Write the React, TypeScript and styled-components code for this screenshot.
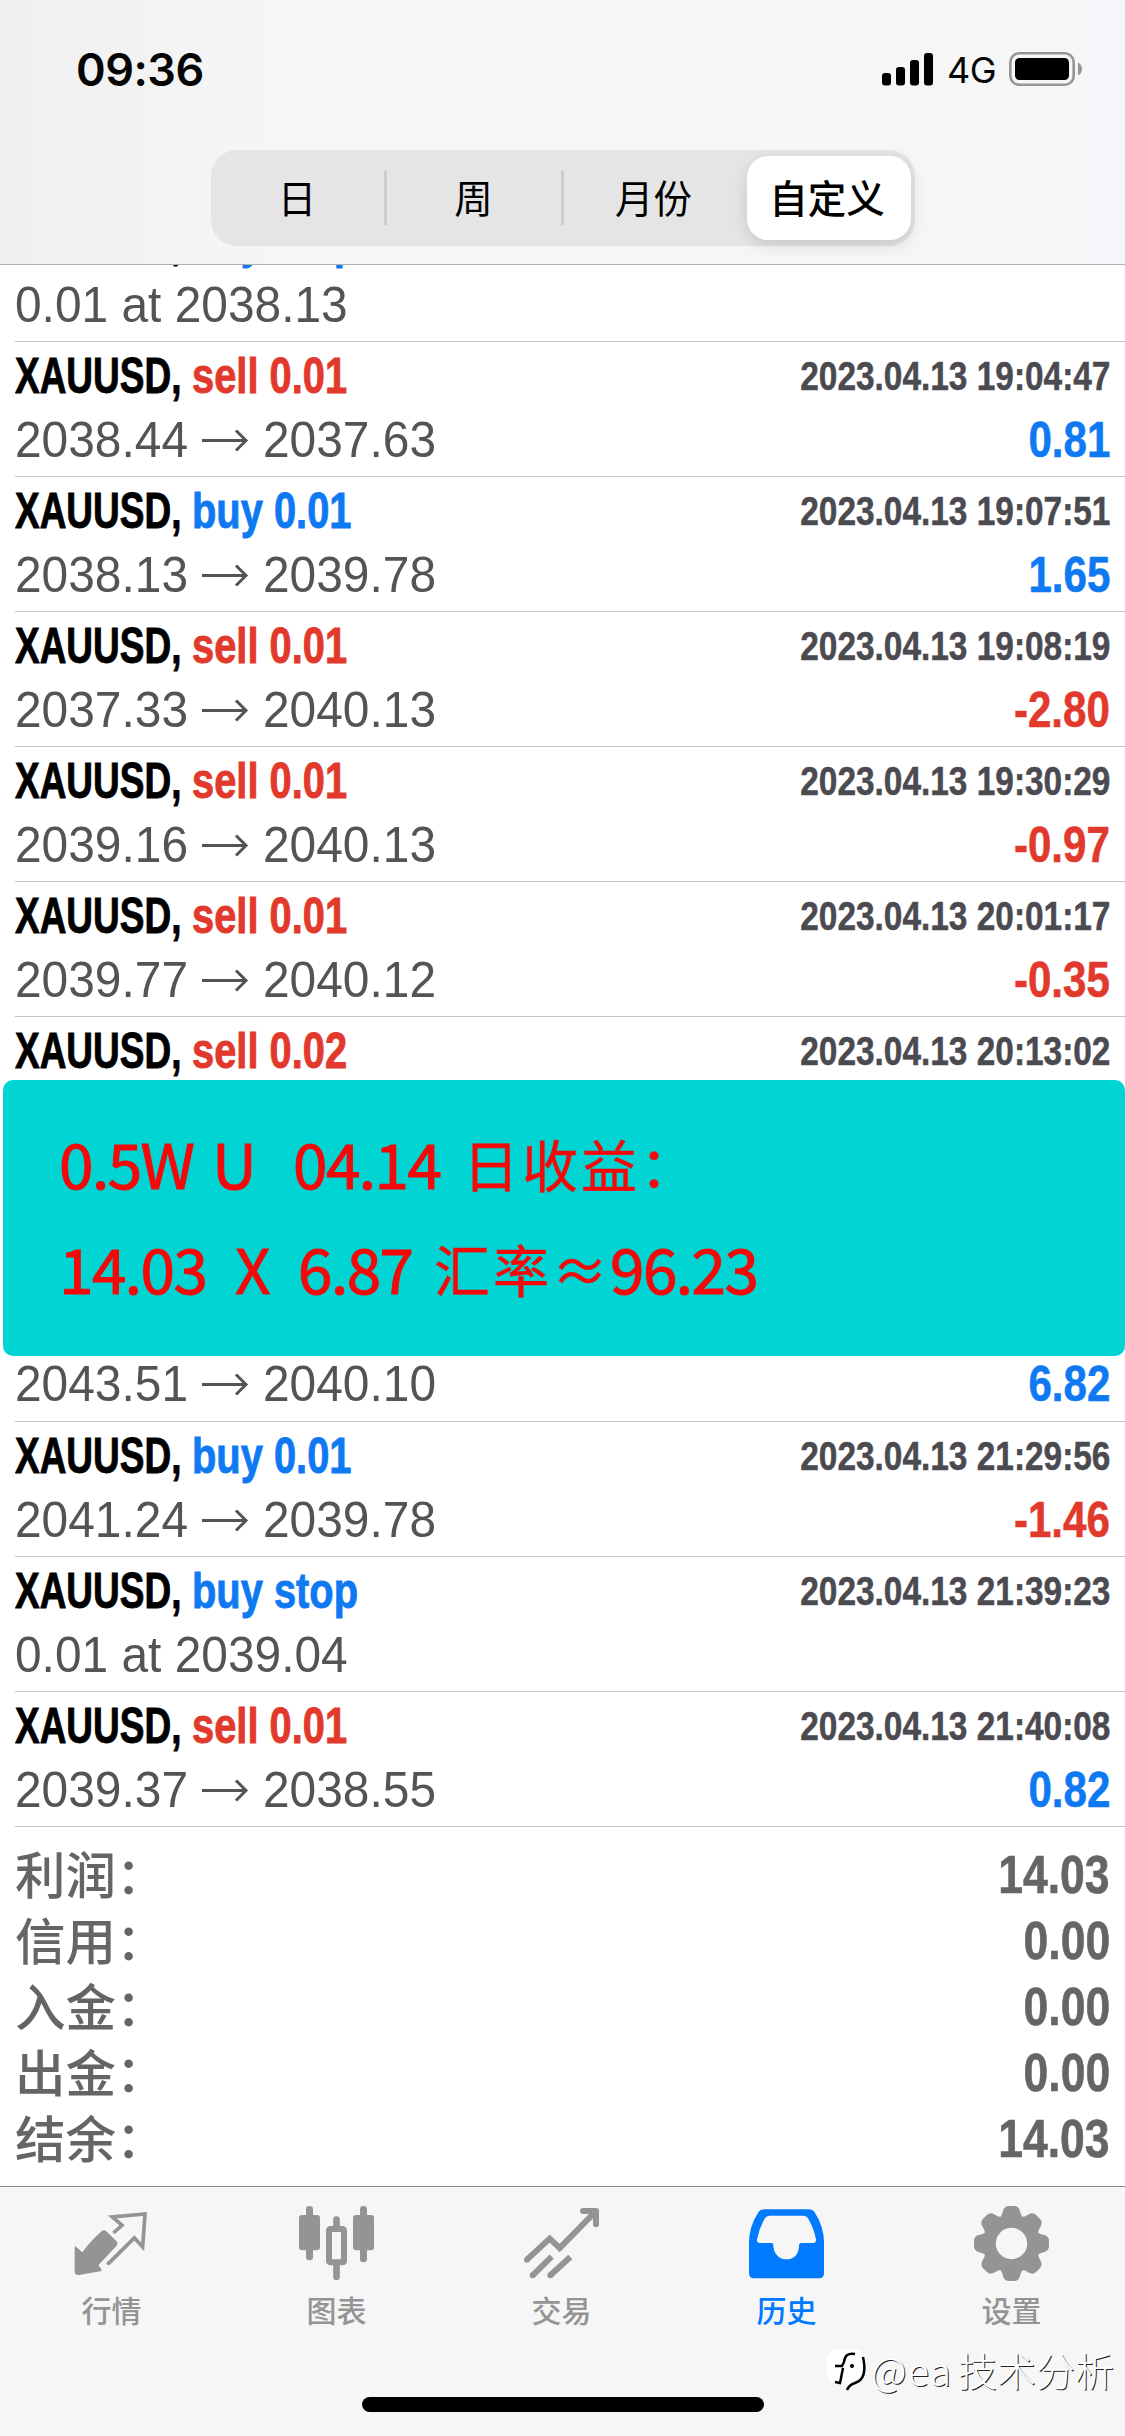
import React from "react";
import styled, { createGlobalStyle } from "styled-components";

const RED = "#e2392d";
const BLUE = "#0f79f2";
const CJK = `"Noto Sans CJK SC", sans-serif`;
const LATIN = `"Liberation Sans", "Noto Sans CJK SC", sans-serif`;

const GlobalStyle = createGlobalStyle`
  * { box-sizing: border-box; }
  body { margin: 0; background: #fff; }
`;

const Screen = styled.div`
  position: relative;
  width: 1125px;
  height: 2436px;
  overflow: hidden;
  display: flex;
  flex-direction: column;
  background: #fff;
  font-family: ${LATIN};
`;

const Header = styled.header`
  position: relative;
  z-index: 1;
  flex: none;
  height: 265px;
  display: flex;
  flex-direction: column;
  align-items: center;
  border-bottom: 1px solid #b0b0b3;
  background: linear-gradient(90deg, #f0f0f1 0, #f3f3f4 150px, #f6f6f6 300px, #f6f6f6 960px, #f5f6f9 1125px);
`;

const StatusBar = styled.div`
  width: 100%;
  height: 150px;
  padding: 41px 42px 0 76px;
  display: flex;
  justify-content: space-between;
  align-items: flex-start;
  font-family: Inter, sans-serif;
  color: #050505;
`;

const Clock = styled.span`
  font-size: 45px;
  font-weight: 600;
  line-height: 57px;
  letter-spacing: -0.5px;
`;

const StatusIcons = styled.div`
  display: flex;
  align-items: center;
  height: 56px;
`;

const Network = styled.span`
  width: 75px;
  padding: 2px 0 0 13px;
  font-size: 36px;
  line-height: 54px;
  letter-spacing: -0.6px;
  white-space: nowrap;
`;

const Segments = styled.nav`
  width: 704px;
  height: 96px;
  padding: 6px 4px 6px 0;
  display: grid;
  grid-template-columns: 176px 177px 183px 164px;
  align-items: center;
  border-radius: 26px;
  background: #e5e5e6;
`;

const Segment = styled.button<{ $active?: boolean; $divider?: boolean }>`
  height: ${(p) => (p.$active ? 84 : 54)}px;
  padding: 0 ${(p) => (p.$divider ? 0 : 3)}px 3px 0;
  border: 0;
  border-right: ${(p) => (p.$divider ? "3px solid #cdcdd0" : "0")};
  border-radius: ${(p) => (p.$active ? 21 : 0)}px;
  background: ${(p) => (p.$active ? "#fff" : "transparent")};
  box-shadow: ${(p) => (p.$active ? "0 5px 16px rgba(0,0,0,.13)" : "none")};
  font: ${(p) => (p.$active ? 500 : 400)} 38.5px/51px ${CJK};
  color: #000;
`;

const History = styled.main`
  flex: none;
  margin-top: -58px;
  height: 1979px;
`;

const Deal = styled.article<{ $height?: number; $open?: boolean }>`
  height: ${(p) => p.$height ?? 135}px;
  margin-left: 15px;
  padding: ${(p) => (p.$height === 66 ? 1 : 7)}px 15px 0 0;
  border-bottom: ${(p) => (p.$open ? "0" : "1px solid #c5c5c7")};
  overflow: hidden;
`;

const Line = styled.div`
  display: flex;
  align-items: center;
  height: 54px;
  line-height: 54px;
  white-space: nowrap;

  & + & { margin-top: 10px; }
`;

const SymbolName = styled.span`
  flex: none;
  width: 177px;
  transform: scaleX(0.747);
  transform-origin: left;
  font-size: 49.5px;
  font-weight: 700;
  -webkit-text-stroke: 0.9px currentColor;
  color: #000;
`;

const Side = styled.span<{ $color: string }>`
  transform: scaleX(0.805);
  transform-origin: left;
  font-size: 49.5px;
  font-weight: 700;
  -webkit-text-stroke: 0.9px currentColor;
  color: ${(p) => p.$color};
`;

const Time = styled.time`
  margin-left: auto;
  transform: scaleX(0.835);
  transform-origin: right;
  font-size: 40px;
  font-weight: 700;
  -webkit-text-stroke: 0.5px currentColor;
  color: #4b4a50;
`;

const Price = styled.span<{ $first?: boolean }>`
  ${(p) => (p.$first ? "width: 186px; flex: none;" : "")}
  transform: scaleX(0.967);
  transform-origin: left;
  font-size: 49.5px;
  color: #535358;
`;

const Target = styled(Price)`
  margin-left: 14px;
`;

const Profit = styled.span<{ $color: string }>`
  margin-left: auto;
  transform: scaleX(0.85);
  transform-origin: right;
  font-size: 49.5px;
  font-weight: 700;
  -webkit-text-stroke: 0.6px currentColor;
  color: ${(p) => p.$color};
`;

const Banner = styled.section`
  height: 276px;
  margin-left: 3px;
  padding: 30px 0 0 56px;
  border-radius: 10px;
  background: #00d5d4;
  color: #f40808;
  font-family: ${CJK};
`;

const BannerLine = styled.div`
  display: flex;
  height: 105px;
  line-height: 105px;
`;

const Word = styled.span<{ $w: number; $cjk?: boolean }>`
  flex: none;
  width: ${(p) => p.$w}px;
  font-size: ${(p) => (p.$cjk ? 56 : 62)}px;
  -webkit-text-stroke: ${(p) => (p.$cjk ? 0.4 : 1)}px currentColor;
  letter-spacing: ${(p) => (p.$cjk ? 3 : -1.5)}px;
  white-space: nowrap;
`;

const Totals = styled.dl`
  margin: 0;
  padding: 15px 15px 0;
`;

const TotalRow = styled.div`
  display: flex;
  justify-content: space-between;
  height: 66px;
  line-height: 66px;
  color: #656565;
`;

const TotalLabel = styled.dt`
  margin-top: -3px;
  font: 500 50.5px/66px ${CJK};
`;

const TotalValue = styled.dd`
  margin: 0;
  transform: scaleX(0.84);
  transform-origin: right;
  font-size: 53px;
  font-weight: 700;
  -webkit-text-stroke: 0.6px currentColor;
`;

const TabBar = styled.footer`
  flex: none;
  display: flex;
  flex-direction: column;
  align-items: center;
  height: 250px;
  border-top: 1px solid #8d8d8f;
  background: #f6f6f6;
`;

const Tabs = styled.nav`
  width: 1125px;
  height: 210px;
  padding-top: 19px;
  margin-left: -2px;
  display: grid;
  grid-template-columns: repeat(5, 225px);
`;

const Tab = styled.a<{ $active?: boolean }>`
  display: flex;
  flex-direction: column;
  align-items: center;
  gap: 8px;
  color: ${(p) => (p.$active ? "#007aff" : "#949494")};
  font: 500 30px/40px ${CJK};
`;

const HomeIndicator = styled.div`
  width: 402px;
  height: 15px;
  border-radius: 8px;
  background: #000;
`;

const Watermark = styled.div`
  position: absolute;
  left: 825px;
  top: 2342px;
  display: flex;
  align-items: center;
  height: 54px;
  color: #fff;
  font: 300 39px/54px ${CJK};
  text-shadow: 1px 1px 0 #222;
  white-space: nowrap;
`;

const Handle = styled.span`
  width: 87px;
  letter-spacing: 1.5px;
`;

interface DealData {
  side?: string;
  color?: string;
  time?: string;
  from?: string;
  to?: string;
  note?: string;
  profit?: string;
}

const earlier: DealData[] = [
  { side: "buy stop", color: BLUE, note: "0.01 at 2038.13" },
  { side: "sell 0.01", color: RED, time: "2023.04.13 19:04:47", from: "2038.44", to: "2037.63", profit: "0.81" },
  { side: "buy 0.01", color: BLUE, time: "2023.04.13 19:07:51", from: "2038.13", to: "2039.78", profit: "1.65" },
  { side: "sell 0.01", color: RED, time: "2023.04.13 19:08:19", from: "2037.33", to: "2040.13", profit: "-2.80" },
  { side: "sell 0.01", color: RED, time: "2023.04.13 19:30:29", from: "2039.16", to: "2040.13", profit: "-0.97" },
  { side: "sell 0.01", color: RED, time: "2023.04.13 20:01:17", from: "2039.77", to: "2040.12", profit: "-0.35" },
];

const later: DealData[] = [
  { side: "buy 0.01", color: BLUE, time: "2023.04.13 21:29:56", from: "2041.24", to: "2039.78", profit: "-1.46" },
  { side: "buy stop", color: BLUE, time: "2023.04.13 21:39:23", note: "0.01 at 2039.04" },
  { side: "sell 0.01", color: RED, time: "2023.04.13 21:40:08", from: "2039.37", to: "2038.55", profit: "0.82" },
];

const totals = [
  ["利润：", "14.03"],
  ["信用：", "0.00"],
  ["入金：", "0.00"],
  ["出金：", "0.00"],
  ["结余：", "14.03"],
];

const ArrowShape = styled.svg`
  flex: none;
  fill: none;
  stroke: #535358;
  stroke-width: 3;
`;

const Arrow = () => (
  <ArrowShape width="48" height="24" viewBox="0 0 48 24">
    <path d="M1 12.500H44M35 2.500L45 12.500L35 22.500" />
  </ArrowShape>
);

function DealTitle({ side, color = RED, time }: DealData) {
  return (
    <Line>
      <SymbolName>XAUUSD,</SymbolName>
      <Side $color={color}>{side}</Side>
      {time && <Time>{time}</Time>}
    </Line>
  );
}

function DealDetail({ from, to, note, profit }: DealData) {
  return (
    <Line>
      {note ? (
        <Price>{note}</Price>
      ) : (
        <>
          <Price $first>{from}</Price>
          <Arrow />
          <Target>{to}</Target>
        </>
      )}
      {profit && <Profit $color={profit.startsWith("-") ? RED : BLUE}>{profit}</Profit>}
    </Line>
  );
}

const DealRow = (deal: DealData) => (
  <Deal>
    <DealTitle {...deal} />
    <DealDetail {...deal} />
  </Deal>
);

const Signal = () => (
  <svg width="52" height="34" viewBox="0 0 52 34" fill="#000">
    <rect x="0" y="21" width="9" height="12.5" rx="3" />
    <rect x="14" y="15" width="9" height="18.5" rx="3" />
    <rect x="28" y="8" width="9" height="25.5" rx="3" />
    <rect x="42" y="1" width="9" height="32.5" rx="3" />
  </svg>
);

const Battery = () => (
  <svg width="74" height="34" viewBox="0 0 74 34">
    <rect x="1.3" y="1.3" width="63.4" height="31.4" rx="9" fill="none" stroke="#969696" strokeWidth="2.6" />
    <rect x="6" y="6" width="54" height="22" rx="4.5" fill="#000" />
    <path d="M69 10.5Q73 12.500 73 17Q73 21.500 69 23.500Z" fill="#969696" />
  </svg>
);

const QuotesIcon = () => (
  <svg width="75" height="75" viewBox="223 107 225 225" fill="currentColor">
    <path d="M225 229Q226 226 230 230L248 246Q274 210 306 183Q313 177 320 183L350 212Q357 219 350 227L296 285L305 296Q308 301 302 303L238 314Q225 316 225 303Z" />
    <path d="M341 188L367 165L338 140L436 131L429 230L404 203L327 279" fill="none" stroke="currentColor" strokeWidth="11" />
    <circle cx="326" cy="279" r="5.500" />
  </svg>
);

const ChartIcon = () => (
  <svg width="75" height="75" viewBox="897 107 225 225" fill="currentColor">
    <rect x="918" y="107" width="21" height="163" rx="10" />
    <rect x="897" y="134" width="63" height="106" rx="9" />
    <rect x="1080" y="107" width="21" height="169" rx="10" />
    <rect x="1059" y="134" width="63" height="106" rx="9" />
    <path d="M1009.500 148V176M1009.500 280V320" stroke="currentColor" strokeWidth="20" strokeLinecap="round" />
    <rect x="987" y="176" width="45" height="100" rx="4" fill="none" stroke="currentColor" strokeWidth="18" />
  </svg>
);

const TradeIcon = () => (
  <svg width="75" height="75" viewBox="372 107 225 225" fill="none" stroke="currentColor" strokeWidth="18" strokeLinejoin="miter">
    <path d="M381 268L449 205L479 233L584 126" />
    <path d="M549 122H588V162" strokeLinecap="round" strokeLinejoin="round" />
    <path d="M398 315L455 259M451 315L511 260" />
    <g fill="currentColor" stroke="none">
      <circle cx="381" cy="268" r="9" />
      <circle cx="398" cy="315" r="9" />
      <circle cx="451" cy="315" r="9" />
    </g>
  </svg>
);

const HistoryIcon = () => (
  <svg width="75" height="75" viewBox="1047 107 225 225" fill="currentColor" fillRule="evenodd">
    <path d="M1094 117H1225Q1238 117 1244 126Q1272 170 1272 216V309Q1272 324 1257 324H1062Q1047 324 1047 309V216Q1047 170 1075 126Q1081 117 1094 117ZM1110 136Q1099 136 1094 145Q1077 175 1071 207Q1070 218 1080 218H1114Q1120 218 1120 225Q1120 244 1132 256Q1143 267 1159.500 267Q1176 267 1187 256Q1197 244 1197 225Q1197 218 1204 218H1239Q1249 218 1248 207Q1242 175 1225 145Q1220 136 1209 136Z" />
  </svg>
);

const SettingsIcon = () => (
  <svg width="75" height="75" viewBox="-112.500 -112.500 225 225" fill="currentColor">
    {[0, 45, 90, 135, 180, 225, 270, 315].map((angle) => (
      <path key={angle} transform={`rotate(${angle})`} d="M-40 -74Q-29 -80 -26 -96Q-22 -112.500 -8 -112.500H8Q22 -112.500 26 -96Q29 -80 40 -74V-40H-40Z" />
    ))}
    <circle r="66" fill="none" stroke="currentColor" strokeWidth="38" />
    <circle r="47" fill="#f6f6f6" />
  </svg>
);

const WatermarkLogo = () => (
  <svg width="46" height="48" viewBox="0 0 46 48" fill="none">
    <path d="M12 4H30Q40 5 41 20Q41 34 32 38L22 45L24 39H9Q2 36 2 26V14Q3 5 12 4Z" fill="#fff" />
    <path d="M38 12Q43 34 30 38Q24 40 22 45" stroke="#000" strokeWidth="2.500" />
    <path d="M30 9Q20 7 19 17L17 21H10M18 23L15 38L10 37" stroke="#000" strokeWidth="2.500" />
    <circle cx="27" cy="21" r="2" fill="#000" />
  </svg>
);

const tabs = [
  { label: "行情", Icon: QuotesIcon },
  { label: "图表", Icon: ChartIcon },
  { label: "交易", Icon: TradeIcon },
  { label: "历史", Icon: HistoryIcon, active: true },
  { label: "设置", Icon: SettingsIcon },
];

export default function App() {
  return (
    <Screen>
      <GlobalStyle />
      <Header>
        <StatusBar>
          <Clock>09:36</Clock>
          <StatusIcons>
            <Signal />
            <Network>4G</Network>
            <Battery />
          </StatusIcons>
        </StatusBar>
        <Segments>
          <Segment $divider>日</Segment>
          <Segment $divider>周</Segment>
          <Segment>月份</Segment>
          <Segment $active>自定义</Segment>
        </Segments>
      </Header>

      <History>
        {earlier.map((deal, i) => (
          <DealRow key={i} {...deal} />
        ))}
        <Deal $height={63} $open>
          <DealTitle side="sell 0.02" time="2023.04.13 20:13:02" />
        </Deal>
        <Banner>
          <BannerLine>
            <Word $w={153}>0.5W</Word>
            <Word $w={81}>U</Word>
            <Word $w={170}>04.14</Word>
            <Word $w={240} $cjk>日收益：</Word>
          </BannerLine>
          <BannerLine>
            <Word $w={176}>14.03</Word>
            <Word $w={63}>X</Word>
            <Word $w={136}>6.87</Word>
            <Word $w={118} $cjk>汇率</Word>
            <Word $w={58} $cjk>≈</Word>
            <Word $w={160}>96.23</Word>
          </BannerLine>
        </Banner>
        <Deal $height={66}>
          <DealDetail from="2043.51" to="2040.10" profit="6.82" />
        </Deal>
        {later.map((deal, i) => (
          <DealRow key={i} {...deal} />
        ))}
        <Totals>
          {totals.map(([label, value]) => (
            <TotalRow key={label}>
              <TotalLabel>{label}</TotalLabel>
              <TotalValue>{value}</TotalValue>
            </TotalRow>
          ))}
        </Totals>
      </History>

      <TabBar>
        <Tabs>
          {tabs.map(({ label, Icon, active }) => (
            <Tab key={label} $active={active}>
              <Icon />
              {label}
            </Tab>
          ))}
        </Tabs>
        <HomeIndicator />
      </TabBar>

      <Watermark>
        <WatermarkLogo />
        <Handle>@ea</Handle>
        <span>技术分析</span>
      </Watermark>
    </Screen>
  );
}
